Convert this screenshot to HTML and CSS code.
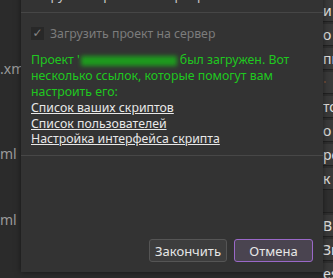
FILE: index.html
```html
<!DOCTYPE html>
<html lang="ru">
<head>
    <meta charset="UTF-8">
    <title>Загрузить проект на сервер</title>
    <link rel="stylesheet" href="styles.css">
</head>
<body>
    <div class="screen">
        <div class="files">
            <div class="file f1">.xm</div>
            <div class="file f2">ml</div>
            <div class="file f3">ml</div>
        </div>
        <div class="middle"></div>
        <div class="side">
            <div class="row">и</div>
            <div class="row">о</div>
            <div class="row">пи</div>
            <div class="row empty"><span class="dot"></span></div>
            <div class="row">то</div>
            <div class="row">о</div>
            <div class="row">ре</div>
            <div class="row">к</div>
            <div class="row tall"></div>
            <div class="row">В</div>
            <div class="row">Зи</div>
            <div class="row">es</div>
        </div>

        <div class="dialog">
            <div class="dialog-title">Загрузить проект на сервер</div>
            <div class="dialog-body">
                <label class="check">
                    <span class="box">&#10003;</span>
                    <span class="check-label">Загрузить проект на сервер</span>
                </label>
                <p class="message">Проект '<span class="hidden-name"></span>был загружен. Вот несколько ссылок, которые помогут вам настроить его:</p>
                <ul class="links">
                    <li><a href="#">Список ваших скриптов</a></li>
                    <li><a href="#">Список пользователей</a></li>
                    <li><a href="#">Настройка интерфейса скрипта</a></li>
                </ul>
            </div>
            <div class="dialog-footer">
                <button class="btn">Закончить</button>
                <button class="btn primary">Отмена</button>
            </div>
        </div>
    </div>
</body>
</html>
```

FILE: styles.css
```css
body {
    margin: 0;
    background: #2b2b2b;
    font-family: 'Noto Sans', 'Open Sans', sans-serif;
    font-size: 12.3px;
}

.screen {
    position: relative;
    width: 333px;
    height: 278px;
    overflow: hidden;
    display: grid;
    grid-template-columns: 30px 293px 10px;
}

.files {
    color: #9a9a9a;
    font-size: 14px;
    padding-top: 59px;
}

.file {
    height: 20px;
}

.f2 {
    margin-top: 65px;
}

.f3 {
    margin-top: 46px;
}

.side {
    background: #2f2f2f;
    color: #e0e0e0;
    font-size: 14px;
    display: flex;
    flex-direction: column;
    gap: 2px;
}

.row {
    background: #3a3a3a;
    height: 21px;
    line-height: 21px;
    border-bottom: 1px solid #222;
    white-space: nowrap;
}

.row.empty {
    position: relative;
}

.dot {
    position: absolute;
    left: 1px;
    top: 9px;
    width: 2px;
    height: 2px;
    background: #6a4a3a;
}

.row.tall {
    height: 20px;
    background: #2f2f2f;
}

/* dialog over the app */
.dialog {
    position: absolute;
    left: 21px;
    top: -16px;
    width: 302px;
    height: 288px;
    background: #333333;
    box-shadow: 0 0 6px rgba(0, 0, 0, 0.5);
    display: flex;
    flex-direction: column;
}

.dialog-title {
    height: 28px;
    line-height: 22px;
    padding-left: 9px;
    color: #c8c8c8;
    font-size: 13px;
    border-bottom: 1px solid #464646;
}

.dialog-body {
    padding: 13px 10px 0;
    height: 129px;
    border-bottom: 1px solid #474747;
}

.check {
    display: flex;
    align-items: center;
    gap: 6px;
    color: #7c7c7c;
    height: 14px;
}

.box {
    width: 13px;
    height: 13px;
    background: #282828;
    color: #858585;
    font-family: 'DejaVu Sans', sans-serif;
    font-size: 12px;
    font-weight: bold;
    line-height: 13px;
    text-align: center;
}

.message {
    margin: 12px 0 0;
    color: #1fc81f;
    line-height: 16px;
}

.hidden-name {
    display: inline-block;
    width: 96px;
    height: 10px;
    margin: 0 3px 0 1px;
    background: #1e9a1e;
    filter: blur(2px);
    vertical-align: middle;
}

.links {
    list-style: none;
    margin: 0;
    padding: 0;
    line-height: 15.7px;
}

.links a {
    color: #e8e8e8;
    text-decoration: underline;
}

.dialog-footer {
    flex: 1;
    display: flex;
    justify-content: flex-end;
    align-items: flex-end;
    gap: 7px;
    padding: 0 10px 10px;
}

.btn {
    width: 78px;
    height: 23px;
    font-family: inherit;
    font-size: 13px;
    color: #e6e6e6;
    background: #3d3d3d;
    border: 1px solid #555;
    border-radius: 3px;
    padding: 0;
}

.btn.primary {
    width: 79px;
    background: #4a4450;
    border-color: #9a68c8;
}
```
